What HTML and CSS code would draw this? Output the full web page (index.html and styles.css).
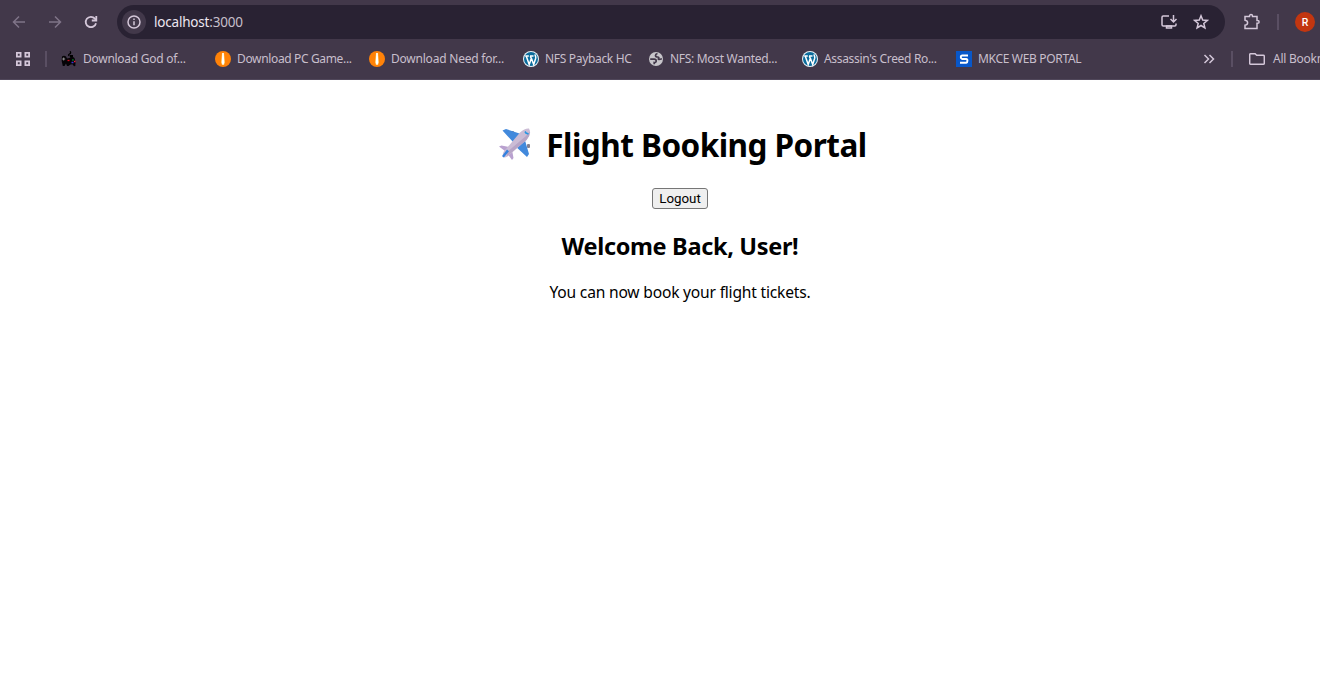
FILE: index.html
```html
<!DOCTYPE html>
<html lang="en">
<head>
<meta charset="utf-8">
<title>Flight Booking Portal</title>
<link rel="stylesheet" href="styles.css">
</head>
<body>
<svg class="defs" width="0" height="0">
  <symbol id="wp" viewBox="0 0 16 16"><circle cx="8" cy="8" r="8" fill="#e9f3f8"/><circle cx="8" cy="8" r="7" fill="#0b6c9c"/><path d="M2.200 5h3.600M7 5h3.500M3.300 5.200l2.900 8.300 2.100-6-1-2.300M8.300 7l2.400 6.500 2-6.300c.5-1.800-.9-2.200-.5-3.900" fill="none" stroke="#fff" stroke-width="1.500"/></symbol>
  <symbol id="flame" viewBox="0 0 16 16"><circle cx="8" cy="8" r="8" fill="#ff8208"/><path d="M7 2h2l1 9.500-1 2.500H7l-1-2.500z" fill="#ffd06e"/><path d="M7.300 2h1.400l.5 9-.5 2.500H7.300L6.800 11z" fill="#fff"/></symbol>
</svg>
<header class="browser">
  <div class="toolbar">
    <svg class="nav dim" viewBox="0 0 16 16"><path d="M14 8H3M8 2.500 2.500 8 8 13.500"/></svg>
    <svg class="nav dim" viewBox="0 0 16 16"><path d="M2 8h11M8 2.500 13.500 8 8 13.500"/></svg>
    <svg class="nav reload" viewBox="0 0 16 16"><path d="M13 9.200A5.200 5.200 0 1 1 11.900 4.600L13 5.800"/><path d="M13.300 2v4.500H8.800"/></svg>
    <div class="omnibox">
      <span class="info"><svg viewBox="0 0 16 16"><circle cx="8" cy="8" r="6"/><path d="M8 7.200v4M8 4.500v1.600"/></svg></span>
      <span class="url"><b>localhost</b>:3000</span>
      <svg class="install" viewBox="0 0 18 16"><path d="M9 2H3.200Q2 2 2 3.200v7.600Q2 12 3.200 12h11.600q1.200 0 1.200-1.200V9.500M13.500 1v7M10.500 5l3 3 3-3"/><path d="M6.500 12h5v2h-5z"/></svg>
      <svg class="star" viewBox="0 0 16 16"><path d="M8 1.800 9.700 6l4.600.4-3.500 3 1.100 4.500L8 11.500l-3.900 2.400 1.100-4.500-3.500-3L6.300 6z"/></svg>
    </div>
    <svg class="puzzle" viewBox="0 0 18 18"><path d="M2 3.500h4.500V3q0-1.400 1.500-1.400T9.500 3v.5H14v4h.6q1.500 0 1.500 1.400t-1.500 1.400H14V15.500H2v-3.300q2.600-.4 2.600-2.500T2 7.200z"/></svg>
    <i class="bar"></i>
    <span class="avatar">R</span>
  </div>
  <nav class="bookmarks">
    <svg class="apps" viewBox="0 0 14 14"><path d="M.9.900h3.700v3.700H.9zM9.400.900h3.700v3.700H9.400zM.9 9.400h3.700v3.700H.9zM9.400 9.400h3.700v3.700H9.400z"/></svg>
    <i class="bar"></i>
    <a class="bm"><svg viewBox="0 0 16 16"><path d="M8.500 5Q6.500 4 8.500 3T9 .3" fill="none" stroke="#000" stroke-width="1.300"/><path d="M1 5.500Q3 3.800 5 5.500l1 2 2.500-.5q2-2.500 5 0 1.500 3 .8 8l-1.300.3-1.500-2-2 .2L7.500 15H6L5 12.500 3.500 15H1.800Q0 9.500 1 5.500z" fill="#050306"/><path d="M9 4h3v2H9z" fill="#000"/><path d="M1.200 8h3M2.700 6.500v3" stroke="#aaa" stroke-width=".8"/><path d="M6.500 9.500h2" stroke="#d50918" stroke-width="1.300"/><path d="M11 9h1.800" stroke="#13a536"/><path d="M10.500 11.500h2" stroke="#3b35d5" stroke-width="1.500"/><path d="M13 10.500h1.500" stroke="#e62035" stroke-width="1.500"/></svg><span class="t1">Download God of...</span></a>
    <a class="bm"><svg><use href="#flame"/></svg><span class="t2">Download PC Game...</span></a>
    <a class="bm"><svg><use href="#flame"/></svg><span class="t3">Download Need for...</span></a>
    <a class="bm short"><svg><use href="#wp"/></svg><span class="t4">NFS Payback HC</span></a>
    <a class="bm"><svg viewBox="0 0 16 16"><circle cx="8" cy="8" r="7" fill="#c7c5ca"/><path d="M2.200 8.200h4q2 0 2 1.700t-2 1.600v1.800M9.500 2.500Q7.500 3 7.500 4.500T9.500 6t1 1.500 3.400.3" fill="none" stroke="#42384a" stroke-width="1.700"/></svg><span class="t5">NFS: Most Wanted...</span></a>
    <a class="bm"><svg><use href="#wp"/></svg><span class="t6">Assassin's Creed Ro...</span></a>
    <a class="bm last"><svg viewBox="0 0 16 16"><path fill="#0857c9" d="M0 0h16v16H0z"/><path d="M12 4.500H6Q4.800 4.500 4.800 6T6 7.900h4.200q1.200 0 1.200 1.800T10.200 11.700H4" fill="none" stroke="#fff" stroke-width="2"/></svg><span class="t7">MKCE WEB PORTAL</span></a>
    <svg class="more" viewBox="0 0 12 12"><path d="M1.500 2 5.500 6l-4 4M6.500 2l4 4-4 4"/></svg>
    <i class="bar"></i>
    <svg class="folder" viewBox="0 0 16 14"><path d="M1.500 1.700h4.600l1.600 1.600h6.600q1 0 1 1v7q0 1-1 1H1.700q-1 0-1-1v-8.600q0-1 .8-1z"/></svg>
    <span class="t8">All Bookmarks</span>
  </nav>
</header>
<main>
  <h1><svg class="plane" viewBox="0 0 34 34"><g fill="#86818f"><rect x="12" y="4" width="4" height="3" rx="1"/><rect x="29" y="17" width="3" height="4" rx="1"/></g><path d="M4.500 3.500 8 2l15 5-7 9zM26 10l5 17-2 3L16 18z" fill="#4289dc"/><path d="M1 19.500l2.500-1L11 20l-4 4zM14 23l1.500 8-1.500 2-5-7z" fill="#b9a1cf"/><path d="M5.500 25 22 5.500q5-4.500 9-4Q34 7 28.500 13L9.500 29.500q-3 1.500-4.500.5-.9-1 .5-5z" fill="#cbbcd5"/><path d="M9.500 29 28.500 13q3.500-4 3.400-8.500L28 9 8 26z" fill="#b7a5c6"/><path d="M4.500 28.500 9 22.500l2 1.700-5 6q-2 .5-1.500-1.700z" fill="#3282df"/><path d="m27 4.500 1 1.500 2.500 1" stroke="#2596e2" stroke-width="1.600" fill="none"/></svg><span>Flight Booking Portal</span></h1>
  <button>Logout</button>
  <h2>Welcome Back, User!</h2>
  <p>You can now book your flight tickets.</p>
</main>
</body>
</html>
```
FILE: styles.css
```css
* { box-sizing: border-box; }
body { margin: 0; height: 677px; overflow: hidden; background: #fff; font-family: "Noto Sans", sans-serif; }
.defs { display: block; height: 0; }
svg { flex: none; }
.browser { height: 80px; background: #42384a; border-bottom: 1px solid #50475a; overflow: hidden; white-space: nowrap; }
.toolbar { display: flex; align-items: center; height: 44px; padding-left: 11px; }
.nav, .info svg, .install, .star, .puzzle, .more, .folder, .apps { fill: none; stroke: #d4c7d9; stroke-width: 1.5; }
.nav { width: 16px; height: 16px; margin-right: 20px; }
.toolbar .dim { stroke: #7f7488; }
.reload { margin-right: 18px; stroke-width: 1.8; }
.omnibox { display: flex; align-items: center; width: 1108px; height: 34px; padding: 0 16px 0 5px; border-radius: 17px; background: #292233; }
.info { display: grid; place-items: center; width: 24px; height: 24px; border-radius: 50%; background: #42384a; }
.info svg { width: 16px; height: 16px; }
.url { flex: 1; margin-left: 8px; font-size: 13.5px; letter-spacing: -.2px; color: #c5bfca; }
.url b { font-weight: 400; color: #ece6f0; }
.install { width: 18px; height: 16px; margin-right: 15px; }
.star { width: 16px; height: 16px; }
.puzzle { width: 18px; height: 18px; margin: 0 16px 0 18px; }
.bar { flex: none; width: 2px; height: 16px; background: #5a4f63; }
.avatar { flex: none; display: grid; place-items: center; width: 20px; height: 20px; margin-left: 16px; border-radius: 50%; background: #c23610; color: #fff; font: 500 10.5px Roboto, sans-serif; }
.bookmarks { display: flex; align-items: center; height: 30px; padding-left: 16px; font-size: 12px; line-height: 16px; color: #c8bfcc; }
.bookmarks span { margin-top: -1px; }
.bookmarks .apps { width: 14px; height: 14px; margin-right: 15px; stroke-width: 1.8; }
.bookmarks > .bar { margin-right: 14px; }
.bookmarks > .more + .bar { margin-right: 16px; }
.bm { flex: none; display: flex; align-items: center; gap: 6px; width: 154px; }
.bm svg { width: 16px; height: 16px; }
.short { width: 125px; }
.last { width: 247px; }
.t1 { letter-spacing: -.27px; }
.t2 { letter-spacing: -.35px; }
.t3 { letter-spacing: -.22px; }
.t4 { letter-spacing: -.32px; }
.t5 { letter-spacing: -.3px; }
.t6 { letter-spacing: -.32px; }
.t7 { letter-spacing: -.32px; }
.t8 { letter-spacing: -.25px; margin-left: 8px; }
.more { width: 12px; height: 12px; margin-right: 16px; }
.folder { width: 16px; height: 14px; }
main { display: flex; flex-direction: column; align-items: center; padding-top: 43px; margin-left: 40px; color: #000; }
h1 { display: flex; align-items: center; height: 43px; margin: 0 -5px 22px 0; font-size: 31.5px; letter-spacing: -.53px; white-space: nowrap; }
h1 span { margin-top: -1px; }
.plane { width: 34px; height: 34px; margin: -1px 14px 0 0; }
button { width: 56px; height: 21px; padding: 0; border: 1px solid #767676; border-radius: 3px; background: #efefef; color: #000; font: 13.333px Roboto, sans-serif; }
h2 { height: 32px; margin: 21px 0; font-size: 23.5px; line-height: 32px; letter-spacing: -.33px; }
p { margin: -2px 0 0; font-size: 15.6px; line-height: 22px; letter-spacing: -.2px; }
```
